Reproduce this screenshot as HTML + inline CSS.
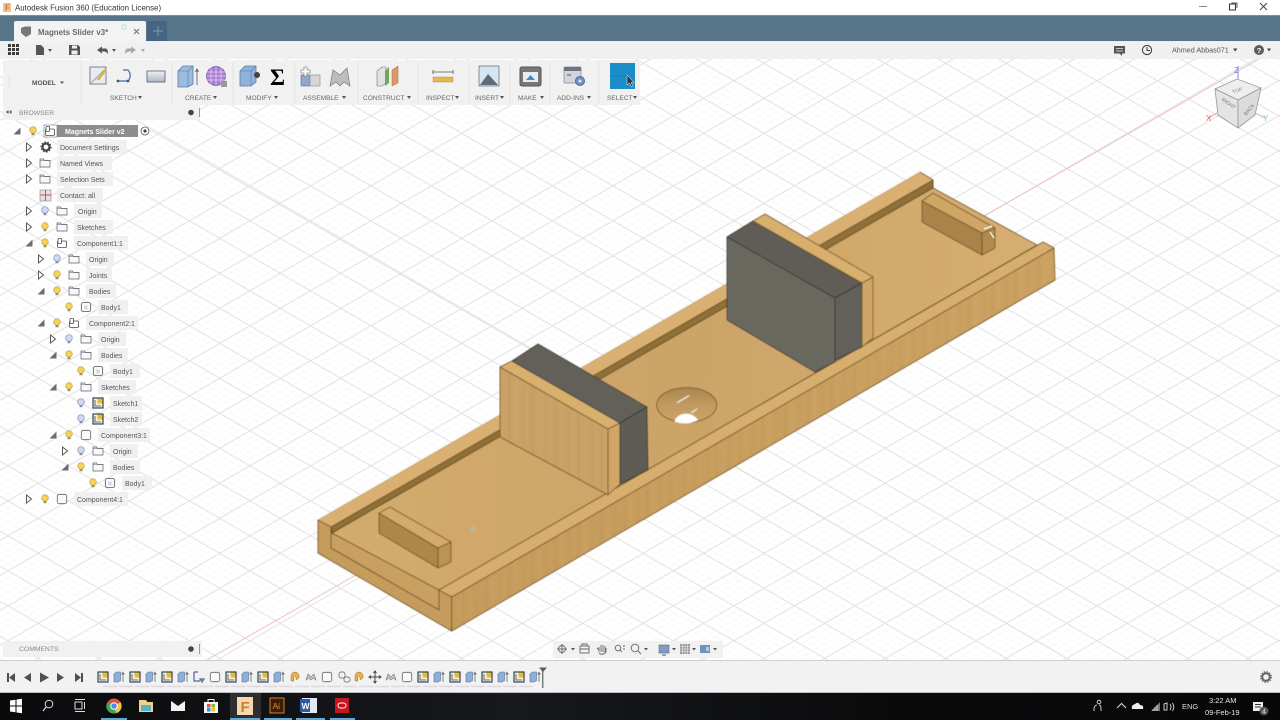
<!DOCTYPE html>
<html lang="en">
<head>
<meta charset="utf-8">
<title>Autodesk Fusion 360</title>
<style>
html,body{margin:0;padding:0;width:1280px;height:720px;overflow:hidden;background:#fff}
svg{display:block}
text{font-family:"Liberation Sans",sans-serif}
.b{font-size:7px;fill:#555}
.t{font-size:6.6px;fill:#666}
.lb{fill:#f0f0f0}
</style>
</head>
<body>
<svg xmlns="http://www.w3.org/2000/svg" width="1280" height="720" viewBox="0 0 1280 720">
<defs>
<filter id="soft" x="-2%" y="-2%" width="104%" height="104%"><feGaussianBlur stdDeviation=".4"/></filter>
<pattern id="minor" width="12.1" height="7" patternUnits="userSpaceOnUse" patternTransform="translate(38.2 10.8)">
<path d="M0 3.5L6.05 0L12.1 3.5L6.05 7Z" fill="none" stroke="#f7f7f7" stroke-width=".7"/>
</pattern>
<pattern id="major" width="60.5" height="35" patternUnits="userSpaceOnUse" patternTransform="translate(38.2 10.8)">
<path d="M0 17.5L30.25 0L60.5 17.5L30.25 35Z" fill="none" stroke="#e1e1e1" stroke-width="1"/>
</pattern>
<pattern id="grain" width="23" height="10" patternUnits="userSpaceOnUse">
<rect x="2" width="3" height="10" fill="#6b4513" opacity=".035"/>
<rect x="9" width="2" height="10" fill="#fff" opacity=".03"/>
<rect x="15" width="4" height="10" fill="#6b4513" opacity=".025"/>
</pattern>
<linearGradient id="floor" x1="0" y1="0" x2="1" y2="0"><stop offset="0" stop-color="#d3ab6d"/><stop offset=".5" stop-color="#cda468"/><stop offset="1" stop-color="#d6ae70"/></linearGradient>
<linearGradient id="rail" x1="0" y1="1" x2="1" y2="0"><stop offset="0" stop-color="#c69c5c"/><stop offset="1" stop-color="#cba261"/></linearGradient>
<linearGradient id="hole" x1="0" y1="0" x2="0" y2="1"><stop offset="0" stop-color="#a98750"/><stop offset=".5" stop-color="#c09a60"/><stop offset="1" stop-color="#cda468"/></linearGradient>
<linearGradient id="rg" x1="0" y1="0" x2="0" y2="1"><stop offset="0" stop-color="#f0f2f5"/><stop offset="1" stop-color="#a9b6c6"/></linearGradient>
<linearGradient id="tk" x1="0" y1="0" x2="1" y2="0"><stop offset="0" stop-color="#0a0a0c"/><stop offset=".4" stop-color="#17191d"/><stop offset=".7" stop-color="#0a0a0b"/><stop offset="1" stop-color="#08080a"/></linearGradient>

<g id="bulb"><circle cx="0" cy="-1" r="3.3" fill="#f2d35c" stroke="#b89a33" stroke-width=".6"/><rect x="-1.5" y="2.2" width="3" height="2" fill="#8d8d78"/></g>
<g id="bulbb"><circle cx="0" cy="-1" r="3.3" fill="#cfd9f0" stroke="#7f90b8" stroke-width=".7"/><rect x="-1.5" y="2.2" width="3" height="2" fill="#8a8f9c"/></g>
<g id="folder"><path d="M-5 -4H-1.5L-.5 -2.6H5V4H-5Z" fill="#f7f7f7" stroke="#59606a" stroke-width=".7"/><path d="M-5 -2.6H5" stroke="#59606a" stroke-width=".5"/></g>
<g id="closed"><path d="M-2.5 -4L2.5 0L-2.5 4Z" fill="#fff" stroke="#5b5b5b" stroke-width="1"/></g>
<g id="open"><path d="M3.5 -3.5V3.5H-3.5Z" fill="#6d6d6d"/></g>
<g id="comp"><rect x="-4.5" y="-2" width="9" height="6.5" rx="1.2" fill="#fff" stroke="#444b55" stroke-width=".8"/><rect x="-4" y="-4.5" width="3.6" height="5" rx=".8" fill="#fff" stroke="#444b55" stroke-width=".8"/></g>
<g id="body"><rect x="-4.7" y="-4.5" width="9.4" height="9" rx="2" fill="#f8f8f8" stroke="#4a5560" stroke-width=".8"/><rect x="-1.5" y="-1.5" width="3" height="4" fill="#cdd6e2"/></g>
<g id="sk"><rect x="-5" y="-5" width="10" height="10" fill="#f4f0d8" stroke="#1f3350" stroke-width="1.1"/><path d="M-3 -3V3H3" stroke="#3a4a66" fill="none" stroke-width=".8"/><rect x="-.5" y="-4.5" width="5" height="5" fill="#e8bc3a"/></g>
<g id="ext"><path d="M-5 -3L-2.5 -5H1.5V3.5L-1 5H-5Z" fill="#8fb0d6" stroke="#4f6f92" stroke-width=".6"/><path d="M4 5V-4M2.6 -2.4L4 -4.6L5.4 -2.4" stroke="#555" stroke-width=".7" fill="none"/></g>
<g id="box"><rect x="-4.7" y="-4.7" width="9.4" height="9.4" rx="2" fill="#fafafa" stroke="#5a6068" stroke-width=".8"/></g>
<g id="oj"><path d="M-4 4V-1A4 4 0 0 1 4 -1V1L1 3V0A1.2 1.2 0 0 0 -1.2 0V4Z" fill="#e9b04b" stroke="#9a7a3a" stroke-width=".5"/></g>
<g id="gj"><path d="M-5 3L-3 -3L0 0L3 -3L5 3L2.5 1L0 3L-2.5 1Z" fill="#c3c3c3" stroke="#777" stroke-width=".6"/></g>
</defs>

<!-- canvas grid -->
<rect width="1280" height="720" fill="#ffffff"/>
<rect y="42" width="1280" height="620" fill="url(#minor)"/>
<rect y="42" width="1280" height="620" fill="url(#major)"/>
<path d="M1280 47L200 664" stroke="#eec3bd" stroke-width="1"/>
<path d="M150 130L1070 660" stroke="#d6edd0" stroke-width="1"/>

<!-- model -->
<g stroke="#6a4a1f" stroke-width=".8" stroke-linejoin="round" filter="url(#soft)">
<!-- front slot wall, drawn beneath the floor so no gap shows -->
<polygon points="331,527 332,533 439,590 439,610 331,548" fill="#c9a060"/>
<!-- floor -->
<polygon points="332,533 825,248 933,188 1037,245 439,590" fill="url(#floor)"/>
<!-- back rail groove and top -->
<polygon points="331,527 933,180 933,188 332,533" fill="#8f7038" stroke="#5c4318"/>
<polygon points="318,520 920,172 933,180 331,527" fill="#d9b071" stroke="none"/>
<path d="M331 527L933 180L920 172M933 180V188" fill="none"/>
<path d="M318 520L920 172" fill="none" stroke="#a78248" stroke-width=".5"/>
<polygon points="318,520 331,527 331,548 439,610 439,590 451.7,597 451.7,631 318,553" fill="#c69c5c"/>
<!-- right rail -->
<polygon points="451.7,597 1054,248 1055,280 451.7,631" fill="url(#rail)"/>
<polygon points="451.7,597 1054,248 1055,280 451.7,631" fill="url(#grain)" stroke="none"/>
<polygon points="439,590 1043,242 1054,248 451.7,597" fill="#d8ae6e"/>
<!-- hole -->
<ellipse cx="686.7" cy="405" rx="30" ry="17.5" fill="url(#hole)"/>
<path d="M674.5 421.5C676 414 690 409 698 420Q687 426 674.5 421.5Z" fill="#ffffff" stroke="none"/>
<path d="M677 402.7L689 395.7M691 413L697 409" stroke="#f5efe0" stroke-width="1.2" fill="none"/>
<!-- block 1 -->
<polygon points="500,367 608,429 608,495 500,437" fill="#c8a266"/>
<polygon points="500,367 608,429 608,495 500,437" fill="url(#grain)" stroke="none"/>
<polygon points="500,367 512,361 620,423 608,429" fill="#d9af6e"/>
<polygon points="608,429 620,423 620,484 608,495" fill="#d0a566"/>
<polygon points="512,361 538,344 647,407 620,423" fill="#63605a" stroke="#3b3934"/>
<polygon points="620,423 647,407 648,470 620,484" fill="#5e5c57" stroke="#2f2d29"/>
<!-- block 2 -->
<polygon points="727,237 835,298 835,362 815,372 727,320" fill="#69675f" stroke="#37352f"/>
<polygon points="727,237 753,221 862,283 835,298" fill="#5f5d57" stroke="#37352f"/>
<polygon points="835,298 862,283 862,347 835,360" fill="#63615b" stroke="#2f2d29"/>
<polygon points="753,221 765,214 873,277 862,283" fill="#d9af6e"/>
<polygon points="862,283 873,277 873,338 862,347" fill="#cfa565"/>
<!-- small blocks -->
<polygon points="379,513 438,548 438,568 379,533" fill="#ad8648"/>
<polygon points="379,513 390,507 451,542 438,548" fill="#d4aa6a"/>
<polygon points="438,548 451,542 451,562 438,568" fill="#bc9353"/>
<polygon points="922,201 982,233 982,255 922,222" fill="#a9834a"/>
<polygon points="922,201 933,193 995,228 982,233" fill="#d0a666"/>
<polygon points="982,233 995,228 995,248 982,255" fill="#b18b4e"/>
</g>
<path d="M984 229L992 226M990 232L994 238" stroke="#e9f0d8" stroke-width="1.5"/>
<circle cx="473" cy="529" r="3" fill="#a9c0ac" opacity=".7"/>

<!-- title bar -->
<rect width="1280" height="15" fill="#ffffff"/>
<rect x="3" y="3" width="8" height="9" fill="#f1c48a"/>
<text x="5" y="10.5" font-size="8" font-weight="bold" fill="#c9752b">F</text>
<text x="15" y="10.5" font-size="7.9" fill="#333">Autodesk Fusion 360 (Education License)</text>
<path d="M1199 6.5H1207" stroke="#888" stroke-width="1"/>
<rect x="1229.5" y="4" width="6" height="6" fill="none" stroke="#333" stroke-width="1"/>
<path d="M1231.5 3H1237V8" fill="none" stroke="#333" stroke-width=".8"/>
<path d="M1260 3L1267 10M1267 3L1260 10" stroke="#444" stroke-width="1"/>

<!-- tab bar -->
<rect y="15" width="1280" height="26" fill="#587489"/>
<rect y="15" width="1280" height="1" fill="#7c8ea0"/>
<rect y="41" width="1280" height="1" fill="#e4eef3"/>
<rect x="14" y="21" width="132" height="21" rx="2" fill="#f3f3f3"/>
<rect x="147" y="21" width="20" height="20" fill="#456582"/>
<path d="M153 31H163M158 26V36" stroke="#7f9ab0" stroke-width="1"/>
<path d="M21 28L25 26.5H31V34L26 37L21 33Z" fill="#777"/>
<text x="38" y="35" font-size="7.9" font-weight="bold" fill="#6a6a6a">Magnets Slider v3*</text>
<circle cx="124" cy="27" r="2.3" fill="none" stroke="#b8e0de" stroke-width="1"/>
<path d="M134 29L139 34M139 29L134 34" stroke="#777" stroke-width="1.2"/>

<!-- quick access -->
<rect y="42" width="1280" height="17" fill="#f0f0f0"/>
<g fill="#3c3c3c"><rect x="8" y="44" width="3" height="3"/><rect x="12" y="44" width="3" height="3"/><rect x="16" y="44" width="3" height="3"/><rect x="8" y="48" width="3" height="3"/><rect x="12" y="48" width="3" height="3"/><rect x="16" y="48" width="3" height="3"/><rect x="8" y="52" width="3" height="3"/><rect x="12" y="52" width="3" height="3"/><rect x="16" y="52" width="3" height="3"/></g>
<path d="M36 45H41L44 48V55H36Z" fill="#555"/><path d="M48 49H52L50 52Z" fill="#555"/>
<path d="M69 45H78L80 47V55H69Z" fill="#555"/><rect x="72" y="45.5" width="5" height="3" fill="#eee"/><rect x="71.5" y="50.5" width="6" height="4" fill="#eee"/>
<path d="M97 50L102 46.5V48.5H106Q108 49 108 54Q106 51 102 51.5V53.5Z" fill="#555"/><path d="M112 49H116L114 52Z" fill="#555"/>
<path d="M136 50L131 46.5V48.5H127Q125 49 125 54Q127 51 131 51.5V53.5Z" fill="#a8a8a8"/><path d="M141 49H145L143 52Z" fill="#a8a8a8"/>
<g transform="translate(1114 46)"><path d="M0 0H11V7.5H8V10L5.5 7.5H0Z" fill="#555"/><path d="M2 2.5H9M2 5H9" stroke="#eee" stroke-width=".8"/></g>
<circle cx="1147" cy="50" r="4.6" fill="none" stroke="#444" stroke-width="1.1"/><path d="M1147 47V50.5H1150" fill="none" stroke="#444" stroke-width="1"/>
<text x="1172" y="52.5" font-size="7.2" fill="#555">Ahmed Abbas071</text>
<path d="M1233 48.5H1237.5L1235.2 51.5Z" fill="#444"/>
<circle cx="1259" cy="50" r="5" fill="#5c5c5c"/><text x="1256.8" y="53" font-size="7.5" font-weight="bold" fill="#fff">?</text>
<path d="M1267 48.5H1271L1269 51.5Z" fill="#444"/>

<!-- toolbar -->
<rect x="3" y="60" width="637" height="45" fill="#f1f1f1"/>
<g stroke="#e2e2e2" stroke-width="1"><path d="M81 62V103M172 62V103M233 62V103M295 62V103M358 62V103M418 62V103M469 62V103M510 62V103M550 62V103M599 62V103M9 75V88" /></g>
<text x="32" y="85" font-size="6.6" font-weight="bold" fill="#555">MODEL</text><path d="M60 81.5H64L62 84Z" fill="#555"/>

<!-- sketch icons -->
<rect x="90" y="67" width="16" height="17" fill="#e8ebf0" stroke="#7a8490" stroke-width="1"/><path d="M91 83L104 70L107 73" fill="#cdd6e2" stroke="#7a8490" stroke-width=".6"/><path d="M98 80L106 69" stroke="#dcb24a" stroke-width="2.4"/>
<path d="M118 81H128A8 8 0 0 0 128 70H123" fill="none" stroke="#3d6fb0" stroke-width="1.2"/><circle cx="118" cy="81" r="1.4" fill="#555"/><circle cx="128" cy="81" r="1.4" fill="#555"/>
<rect x="147" y="71" width="18" height="11" fill="url(#rg)" stroke="#55606e" stroke-width=".8"/>
<!-- create -->
<path d="M178 71L183 66H193V84L188 87H178Z" fill="#9cbbe0" stroke="#5d7b9d" stroke-width=".8"/><path d="M178 71H188V87M188 71L193 66" fill="none" stroke="#5d7b9d" stroke-width=".6"/><path d="M197 85V70M195.5 72L197 69L198.5 72" stroke="#555" fill="none" stroke-width=".8"/>
<circle cx="216" cy="76" r="9.5" fill="#a77dd4" stroke="#7b5aa5" stroke-width=".8"/><path d="M207 72H226M207 76H226M207 80H226M211 67V85M216 67V85M221 67V85" stroke="#e6daf3" stroke-width=".7"/><rect x="221" y="81" width="6" height="6" fill="#999"/>
<!-- modify -->
<path d="M240 71L245 66H256V82L251 86H240Z" fill="#8fb2dc" stroke="#5d7b9d" stroke-width=".8"/><path d="M240 71H251V86M251 71L256 66" fill="none" stroke="#5d7b9d" stroke-width=".6"/><circle cx="257" cy="75" r="3" fill="#444"/>
<text x="270" y="85" font-size="23" font-weight="bold" fill="#000" style="font-family:'Liberation Serif',serif">Σ</text>
<!-- assemble -->
<rect x="301" y="75" width="9" height="11" fill="#8fa9c8" stroke="#5d6f85" stroke-width=".6"/><rect x="310" y="75" width="10" height="11" fill="#d6d6d6" stroke="#888" stroke-width=".6"/><path d="M304 67H307V70H310V73H307V76H304V73H301V70H304Z" fill="#fff" stroke="#666" stroke-width=".6"/>
<path d="M330 86L333 70L340 75L347 68L350 86L344 82L340 86L336 82Z" fill="#bdbdbd" stroke="#7a7a7a" stroke-width=".7"/>
<!-- construct -->
<path d="M377 71L382 67H386V83L382 86H377Z" fill="#e2e2e2" stroke="#777" stroke-width=".6"/><path d="M385 71L389 67V83L385 86Z" fill="#6ea85e"/><path d="M392 70L398 66V83L392 86Z" fill="#dc9a68" stroke="#a66e42" stroke-width=".5"/>
<!-- inspect -->
<path d="M433 72H453M433 70V74M453 70V74" stroke="#555" stroke-width=".8"/><rect x="433" y="77" width="20" height="5" fill="#e4b84a" stroke="#a8873a" stroke-width=".4"/>
<!-- insert -->
<rect x="479" y="66" width="20" height="20" fill="#d5e6f2" stroke="#6a7580" stroke-width=".8"/><path d="M480 85L488 74L498 85Z" fill="#606a74"/>
<!-- make -->
<rect x="520" y="67" width="21" height="19" rx="2" fill="#777" stroke="#555"/><rect x="523" y="72" width="15" height="10" fill="#e8edf2"/><path d="M526 80H535L530.5 75Z" fill="#3f8ec2"/>
<!-- add-ins -->
<rect x="564" y="67" width="17" height="16" rx="1" fill="#d2d6dc" stroke="#808890" stroke-width=".7"/><rect x="564" y="67" width="17" height="4" fill="#6c7480"/><path d="M567 75H571" stroke="#555"/>
<circle cx="580" cy="81" r="4.5" fill="#6f93bf" stroke="#4f6d94"/><circle cx="580" cy="81" r="1.5" fill="#e4e8ee"/>
<!-- select -->
<rect x="610" y="63" width="25" height="26" fill="#1b8ec9"/>
<path d="M627 75V85L629.500 83L631.500 87L633 86L631 82.500H634Z" fill="#333" stroke="#fff" stroke-width=".5"/>
<path d="M610 76H627" stroke="#1777a8" stroke-width=".7"/>

<g>
<text class="t" x="110" y="100">SKETCH</text><path d="M138 96H142L140 99Z" fill="#555"/>
<text class="t" x="185" y="100">CREATE</text><path d="M213 96H217L215 99Z" fill="#555"/>
<text class="t" x="246" y="100">MODIFY</text><path d="M274 96H278L276 99Z" fill="#555"/>
<text class="t" x="303" y="100">ASSEMBLE</text><path d="M342 96H346L344 99Z" fill="#555"/>
<text class="t" x="363" y="100">CONSTRUCT</text><path d="M407 96H411L409 99Z" fill="#555"/>
<text class="t" x="426" y="100">INSPECT</text><path d="M455 96H459L457 99Z" fill="#555"/>
<text class="t" x="475" y="100">INSERT</text><path d="M500 96H504L502 99Z" fill="#555"/>
<text class="t" x="518" y="100">MAKE</text><path d="M540 96H544L542 99Z" fill="#555"/>
<text class="t" x="557" y="100">ADD-INS</text><path d="M587 96H591L589 99Z" fill="#555"/>
<text class="t" x="607" y="100">SELECT</text><path d="M633 96H637L635 99Z" fill="#555"/>
</g>

<!-- viewcube -->
<path d="M1238 79V66" stroke="#8b8fd8" stroke-width="1"/>
<path d="M1217 113L1209 118" stroke="#e39a96" stroke-width="1"/>
<path d="M1255 113L1265 118" stroke="#a3d8a0" stroke-width="1"/>
<polygon points="1215,89 1237,79 1261,88 1238,100" fill="#eeeeee" stroke="#999" stroke-width=".8"/>
<polygon points="1215,89 1238,100 1238,128 1218,115" fill="#e4e4e4" stroke="#999" stroke-width=".8"/>
<polygon points="1238,100 1261,88 1255,115 1238,128" fill="#dcdcdc" stroke="#999" stroke-width=".8"/>
<text x="1232" y="92" font-size="5" fill="#888" transform="rotate(-20 1238 90)">TOP</text>
<text x="1219" y="104" font-size="5" fill="#777" transform="rotate(35 1226 106)">RIGHT</text>
<text x="1242" y="113" font-size="5" fill="#777" transform="rotate(-50 1247 110)">BACK</text>
<text x="1234" y="73" font-size="8" fill="#7a7fd6">Z</text>
<text x="1206" y="121" font-size="8" fill="#e06a64">X</text>
<text x="1263" y="121" font-size="8" fill="#86cf80">Y</text>

<!-- browser header -->
<rect x="3" y="105" width="197" height="15" fill="#f1f1f1"/>
<path d="M9 112L11.500 110V114ZM6 112L8.500 110V114Z" fill="#555"/>
<text x="19" y="115" font-size="6.8" fill="#8a8a8a">BROWSER</text>
<circle cx="191" cy="112.500" r="2.800" fill="#444"/><path d="M199.500 108V117" stroke="#999" stroke-width="1"/>

<!-- browser tree label backgrounds -->
<g class="lb">
<rect x="57" y="140" width="70" height="14"/><rect x="57" y="156" width="55" height="14"/><rect x="57" y="172" width="56" height="14"/><rect x="57" y="188" width="46" height="14"/>
<rect x="74" y="204" width="28" height="14"/><rect x="74" y="220" width="39" height="14"/><rect x="74" y="236" width="54" height="14"/>
<rect x="86" y="252" width="28" height="14"/><rect x="86" y="268" width="26" height="14"/><rect x="86" y="284" width="30" height="14"/><rect x="98" y="300" width="30" height="14"/>
<rect x="86" y="316" width="52" height="14"/><rect x="98" y="332" width="28" height="14"/><rect x="98" y="348" width="30" height="14"/><rect x="110" y="364" width="30" height="14"/>
<rect x="98" y="380" width="38" height="14"/><rect x="110" y="396" width="32" height="14"/><rect x="110" y="412" width="32" height="14"/><rect x="98" y="428" width="52" height="14"/>
<rect x="110" y="444" width="28" height="14"/><rect x="110" y="460" width="30" height="14"/><rect x="122" y="476" width="30" height="14"/><rect x="74" y="492" width="54" height="14"/>
</g>

<!-- tree -->
<use href="#open" x="17" y="131"/><use href="#bulb" x="33" y="131"/>
<rect x="44" y="125" width="94" height="12" fill="#8d8d8d"/><rect x="44" y="125" width="13" height="12" fill="#fff" stroke="#777" stroke-width=".6"/><use href="#comp" x="50" y="131"/>
<text x="65" y="134" font-size="7" font-weight="bold" fill="#fff">Magnets Slider v2</text>
<circle cx="145" cy="131" r="4" fill="#fff" stroke="#555" stroke-width=".8"/><circle cx="145" cy="131" r="1.600" fill="#444"/>

<use href="#closed" x="29" y="147"/>
<circle cx="46" cy="147" r="3.500" fill="none" stroke="#444" stroke-width="2.200"/><circle cx="46" cy="147" r="5" fill="none" stroke="#444" stroke-width="1.200" stroke-dasharray="1.500 1.600"/>
<text class="b" x="60" y="150">Document Settings</text>
<use href="#closed" x="29" y="163"/><use href="#folder" x="45" y="163"/><text class="b" x="60" y="166">Named Views</text>
<use href="#closed" x="29" y="179"/><use href="#folder" x="45" y="179"/><text class="b" x="60" y="182">Selection Sets</text>
<rect x="40" y="190" width="11" height="11" fill="#e9dfe0" stroke="#888" stroke-width=".6"/><path d="M40 195H51M45.500 190V201" stroke="#c0545a" stroke-width="1"/><text class="b" x="60" y="198">Contact: all</text>

<use href="#closed" x="29" y="211"/><use href="#bulbb" x="45" y="211"/><use href="#folder" x="62" y="211"/><text class="b" x="78" y="214">Origin</text>
<use href="#closed" x="29" y="227"/><use href="#bulb" x="45" y="227"/><use href="#folder" x="62" y="227"/><text class="b" x="77" y="230">Sketches</text>
<use href="#open" x="29" y="243"/><use href="#bulb" x="45" y="243"/><use href="#comp" x="62" y="243"/><text class="b" x="77" y="246">Component1:1</text>

<use href="#closed" x="41" y="259"/><use href="#bulbb" x="57" y="259"/><use href="#folder" x="74" y="259"/><text class="b" x="89" y="262">Origin</text>
<use href="#closed" x="41" y="275"/><use href="#bulb" x="57" y="275"/><use href="#folder" x="74" y="275"/><text class="b" x="89" y="278">Joints</text>
<use href="#open" x="41" y="291"/><use href="#bulb" x="57" y="291"/><use href="#folder" x="74" y="291"/><text class="b" x="89" y="294">Bodies</text>
<use href="#bulb" x="69" y="307"/><use href="#body" x="86" y="307"/><text class="b" x="101" y="310">Body1</text>

<use href="#open" x="41" y="323"/><use href="#bulb" x="57" y="323"/><use href="#comp" x="74" y="323"/><text class="b" x="89" y="326">Component2:1</text>
<use href="#closed" x="53" y="339"/><use href="#bulbb" x="69" y="339"/><use href="#folder" x="86" y="339"/><text class="b" x="101" y="342">Origin</text>
<use href="#open" x="53" y="355"/><use href="#bulb" x="69" y="355"/><use href="#folder" x="86" y="355"/><text class="b" x="101" y="358">Bodies</text>
<use href="#bulb" x="81" y="371"/><use href="#body" x="98" y="371"/><text class="b" x="113" y="374">Body1</text>
<use href="#open" x="53" y="387"/><use href="#bulb" x="69" y="387"/><use href="#folder" x="86" y="387"/><text class="b" x="101" y="390">Sketches</text>
<use href="#bulbb" x="81" y="403"/><use href="#sk" x="98" y="403"/><text class="b" x="113" y="406">Sketch1</text>
<use href="#bulbb" x="81" y="419"/><use href="#sk" x="98" y="419"/><text class="b" x="113" y="422">Sketch2</text>
<use href="#open" x="53" y="435"/><use href="#bulb" x="69" y="435"/><use href="#box" x="86" y="435"/><text class="b" x="101" y="438">Component3:1</text>
<use href="#closed" x="65" y="451"/><use href="#bulbb" x="81" y="451"/><use href="#folder" x="98" y="451"/><text class="b" x="113" y="454">Origin</text>
<use href="#open" x="65" y="467"/><use href="#bulb" x="81" y="467"/><use href="#folder" x="98" y="467"/><text class="b" x="113" y="470">Bodies</text>
<use href="#bulb" x="93" y="483"/><use href="#body" x="110" y="483"/><text class="b" x="125" y="486">Body1</text>
<use href="#closed" x="29" y="499"/><use href="#bulb" x="45" y="499"/><use href="#box" x="62" y="499"/><text class="b" x="77" y="502">Component4:1</text>

<!-- comments -->
<rect x="3" y="641" width="199" height="16" fill="#f1f1f1"/>
<text x="19" y="651" font-size="6.800" fill="#8a8a8a">COMMENTS</text>
<circle cx="191" cy="649" r="2.800" fill="#444"/><path d="M199.500 644V654" stroke="#999" stroke-width="1"/>

<!-- nav bar -->
<rect x="553" y="641" width="170" height="17" fill="#f1f1f1"/>
<g fill="none" stroke="#666" stroke-width=".9">
<circle cx="562" cy="649" r="3.500"/><path d="M562 644V654M557 649H567"/>
<rect x="580" y="646" width="9" height="7"/><path d="M582 646V644H587V646M580 649H589"/>
<path d="M599 652V647M601 652V645M603 652V645M605 652V646M599 650L597 648M599 653Q602 656 606 652V648"/>
<circle cx="618" cy="648" r="2.800"/><path d="M620 650L622 652M623 646H625M623 649H625"/>
<circle cx="635" cy="648" r="3.800"/><path d="M638 651L641 654"/>
</g>
<path d="M571 648H575L573 650.500ZM644 648H648L646 650.500ZM672 648H676L674 650.500ZM692 648H696L694 650.500ZM713 648H717L715 650.500Z" fill="#555"/>
<rect x="659" y="645" width="10" height="8" fill="#7f9cc3" stroke="#556" stroke-width=".5"/><path d="M662 655H666" stroke="#556"/>
<rect x="680" y="644" width="10" height="10" fill="#999"/><path d="M682.500 644V654M685 644V654M687.500 644V654M680 646.500H690M680 649H690M680 651.500H690" stroke="#eee" stroke-width=".6"/>
<rect x="700" y="645" width="10" height="8" fill="#6f92c2"/><rect x="706" y="647" width="3" height="4" fill="#b8c8dd"/>

<!-- timeline -->
<rect y="660" width="1280" height="33" fill="#f2f2f2"/>
<rect y="660" width="1280" height="1" fill="#cfcfcf"/>
<g fill="#4f4f4f">
<path d="M7 673H9V682H7ZM9 677.500L15 673V682Z"/>
<path d="M24 677.500L31 673V682Z"/>
<path d="M40 672.500L49 677.500L40 682.500Z"/>
<path d="M64 677.500L57 673V682Z"/>
<path d="M75 673L81 677.500L75 682ZM81 673H83V682H81Z"/>
</g>
<g>
<use href="#sk" x="103" y="677"/><use href="#ext" x="119" y="677"/><use href="#sk" x="135" y="677"/><use href="#ext" x="151" y="677"/><use href="#sk" x="167" y="677"/><use href="#ext" x="183" y="677"/>
<path d="M194 672V681H200M198 672H194M200 679H204L202 682Z" fill="none" stroke="#4a6a92" stroke-width="1.200"/>
<use href="#box" x="215" y="677"/><use href="#sk" x="231" y="677"/><use href="#ext" x="247" y="677"/><use href="#sk" x="263" y="677"/><use href="#ext" x="279" y="677"/>
<use href="#oj" x="295" y="677"/><use href="#gj" x="311" y="677"/><use href="#box" x="327" y="677"/>
<g fill="none" stroke="#555" stroke-width=".7"><rect x="339" y="672" width="6" height="6" rx="2"/><rect x="344" y="677" width="6" height="5" rx="2"/></g>
<use href="#oj" x="359" y="677"/>
<path d="M375 671V683M369 677H381M373.500 673L375 671L376.500 673M373.500 681L375 683L376.500 681M371 675.500L369 677L371 678.500M379 675.500L381 677L379 678.500" fill="none" stroke="#444" stroke-width="1"/>
<use href="#gj" x="391" y="677"/><use href="#box" x="407" y="677"/><use href="#sk" x="423" y="677"/><use href="#ext" x="439" y="677"/><use href="#sk" x="455" y="677"/><use href="#ext" x="471" y="677"/><use href="#sk" x="487" y="677"/><use href="#ext" x="503" y="677"/><use href="#sk" x="519" y="677"/><use href="#ext" x="535" y="677"/>
</g>
<path d="M103 686.500H535" stroke="#dcdcdc" stroke-width="1.500" stroke-dasharray="14 2"/>
<path d="M539 667.500H547L543 672Z" fill="#5c5c5c"/><path d="M542.800 670V688" stroke="#444" stroke-width="1"/>
<circle cx="1266" cy="677" r="3.800" fill="none" stroke="#666" stroke-width="2"/><circle cx="1266" cy="677" r="5.300" fill="none" stroke="#666" stroke-width="1.200" stroke-dasharray="1.500 1.300"/>

<!-- taskbar -->
<rect y="693" width="1280" height="27" fill="url(#tk)"/>
<rect y="692" width="1280" height="1" fill="#bdbdbd"/>
<rect x="230" y="693" width="31" height="27" fill="#2e2e2e"/>
<path d="M10 700.500L15.500 699.700V705.500H10ZM16.500 699.500L22 698.700V705.500H16.500ZM10 706.500H15.500V712.300L10 711.500ZM16.500 706.500H22V713.300L16.500 712.500Z" fill="#fff"/>
<circle cx="49" cy="704" r="3.800" fill="none" stroke="#ddd" stroke-width="1"/><path d="M46 707L43 711" stroke="#ddd" stroke-width="1.200"/>
<rect x="75" y="702" width="7" height="7" fill="none" stroke="#ddd"/><path d="M75 699.500H85M75 711.500H85M84.500 702V709" stroke="#ddd" stroke-width="1"/>
<circle cx="114" cy="706" r="7.500" fill="#dd5144"/><path d="M114 706L120.500 702A7.500 7.500 0 0 1 116 713.200Z" fill="#f4c33d"/><path d="M114 706L116 713.300A7.500 7.500 0 0 1 107.500 702Z" fill="#3fa55a"/><circle cx="114" cy="706" r="3.300" fill="#4a90e2" stroke="#fff" stroke-width="1"/>
<path d="M139 700H146L147.500 702H153V712H139Z" fill="#eed28a"/><rect x="141" y="705" width="10" height="6" fill="#58b3c5"/>
<rect x="171" y="701" width="14" height="10" fill="#f2f2f2"/><path d="M171 701L178 706L185 701Z" fill="#151515"/>
<path d="M204 702H218V713H204Z" fill="#f5f5f5"/><path d="M208 702V699.500H214V702" fill="none" stroke="#f5f5f5"/><rect x="207" y="704" width="3.500" height="3.500" fill="#e0533d"/><rect x="211.500" y="704" width="3.500" height="3.500" fill="#7dba42"/><rect x="207" y="708" width="3.500" height="3.500" fill="#2a97d8"/><rect x="211.500" y="708" width="3.500" height="3.500" fill="#f3bb2f"/>
<rect x="237" y="697" width="16" height="18" fill="#f4d9b0"/><text x="240.500" y="712" font-size="15" font-weight="bold" fill="#d47d26">F</text>
<rect x="270" y="698" width="14" height="15" fill="#3a1d08" stroke="#e98b28" stroke-width=".9"/><text x="272.500" y="709" font-size="8.500" fill="#e98b28">Ai</text>
<rect x="302" y="698" width="15" height="15" fill="#dfe7f3"/><rect x="300" y="699" width="10" height="13" fill="#2a5aa8"/><text x="301.500" y="709" font-size="8.500" font-weight="bold" fill="#fff">W</text>
<rect x="335" y="698" width="14" height="15" fill="#c4161c"/><rect x="338" y="703" width="8" height="5" rx="2.500" fill="none" stroke="#fff" stroke-width="1"/>
<g fill="#5fa8d8"><rect x="101" y="718" width="26" height="2"/><rect x="230" y="718" width="30" height="2"/><rect x="264" y="718" width="28" height="2"/><rect x="296" y="718" width="29" height="2"/><rect x="330" y="718" width="25" height="2"/></g>

<!-- tray -->
<circle cx="1099" cy="702" r="1.800" fill="none" stroke="#ccc"/><path d="M1094 711V708Q1095 705 1097 705M1101 711V708Q1101 705 1099 705" stroke="#ccc" fill="none"/>
<path d="M1117 708L1121.500 703.500L1126 708" fill="none" stroke="#ddd" stroke-width="1"/>
<path d="M1132 709H1143Q1144 705 1140 705Q1138 701 1135 704Q1131 705 1132 709Z" fill="#eee"/>
<path d="M1151 711L1160 702V711Z" fill="#777"/><path d="M1153 711V709M1155 711V707M1157 711V705" stroke="#ccc"/>
<path d="M1164 704V710H1167V703ZM1170 704Q1172 707 1170 710M1172.500 703Q1175 707 1172.500 711" fill="none" stroke="#ccc"/>
<text x="1182" y="709" font-size="7.500" fill="#ddd">ENG</text>
<text x="1209" y="703" font-size="7.500" fill="#e4e4e4">3:22 AM</text>
<text x="1205" y="715" font-size="7.500" fill="#e4e4e4">09-Feb-19</text>
<rect x="1253" y="702" width="10" height="9" fill="#eee"/><path d="M1255 704.500H1261M1255 707H1261" stroke="#333"/>
<circle cx="1264" cy="711" r="4.500" fill="#555"/><text x="1262.300" y="713.500" font-size="6.500" fill="#fff">4</text>
</svg>
</body>
</html>
